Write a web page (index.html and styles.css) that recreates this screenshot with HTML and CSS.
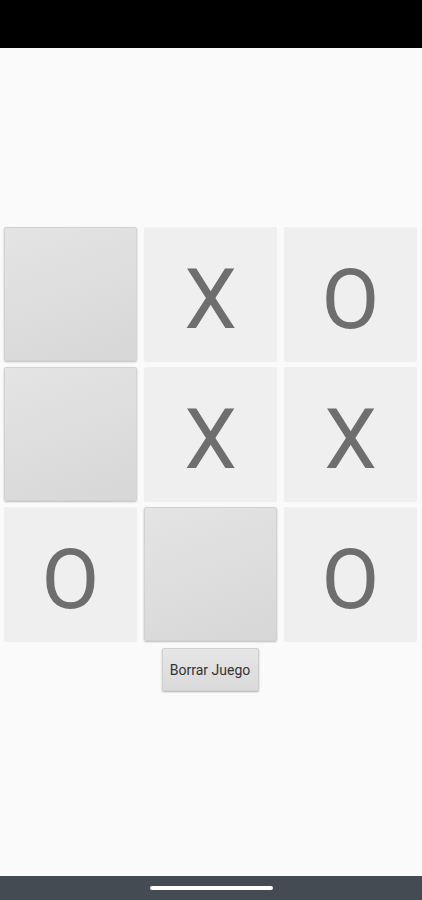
FILE: index.html
```html
<!DOCTYPE html>
<html lang="es">
<head>
    <meta charset="UTF-8">
    <meta name="viewport" content="width=device-width, initial-scale=1.0">
    <title>Tres en Raya</title>
    <link rel="stylesheet" href="styles.css">
</head>
<body>
    <div class="status-bar"></div>
    <div class="main">
        <div class="board">
            <button class="cell empty"></button>
            <button class="cell">X</button>
            <button class="cell">O</button>
            <button class="cell empty"></button>
            <button class="cell">X</button>
            <button class="cell">X</button>
            <button class="cell">O</button>
            <button class="cell empty"></button>
            <button class="cell">O</button>
        </div>
        <button class="reset-btn">Borrar Juego</button>
    </div>
    <div class="nav-bar">
        <div class="home-pill"></div>
    </div>
</body>
</html>
```
FILE: styles.css
```css
* {
    margin: 0;
    padding: 0;
    box-sizing: border-box;
}

body {
    font-family: 'Roboto', 'Liberation Sans', sans-serif;
    background: #fafafa;
    height: 900px;
    display: flex;
    flex-direction: column;
}

.status-bar {
    height: 48px;
    background: #000;
}

.main {
    flex: 1;
    padding-top: 179px;
    display: flex;
    flex-direction: column;
    align-items: center;
}

.board {
    display: grid;
    grid-template-columns: repeat(3, 133px);
    grid-template-rows: repeat(3, 134px);
    gap: 6px 7px;
    margin-left: -1px;
}

.cell {
    font-family: 'Roboto', sans-serif;
    font-size: 84px;
    color: #6e6e6e;
    background: #efefef;
    border: none;
    border-radius: 2px;
    box-shadow: 0 1px 1px rgba(0, 0, 0, 0.05);
    line-height: 1;
    padding-top: 12px;
}

.cell.empty {
    background: linear-gradient(160deg, #e4e4e4, #d7d7d7);
    border: 1px solid #d2d2d2;
    box-shadow: 0 1px 2px rgba(0, 0, 0, 0.25);
}

.reset-btn {
    margin-top: 7px;
    margin-left: -2px;
    width: 97px;
    height: 43px;
    font-family: 'Roboto', sans-serif;
    font-size: 14px;
    color: #333;
    background: linear-gradient(180deg, #e6e6e6, #dadada);
    border: 1px solid #d0d0d0;
    border-radius: 2px;
    box-shadow: 0 1px 2px rgba(0, 0, 0, 0.3);
}

.nav-bar {
    height: 24px;
    background: #454b52;
    display: flex;
    justify-content: center;
    padding-top: 10px;
}

.home-pill {
    width: 123px;
    height: 4px;
    border-radius: 2px;
    background: #fff;
}
```
